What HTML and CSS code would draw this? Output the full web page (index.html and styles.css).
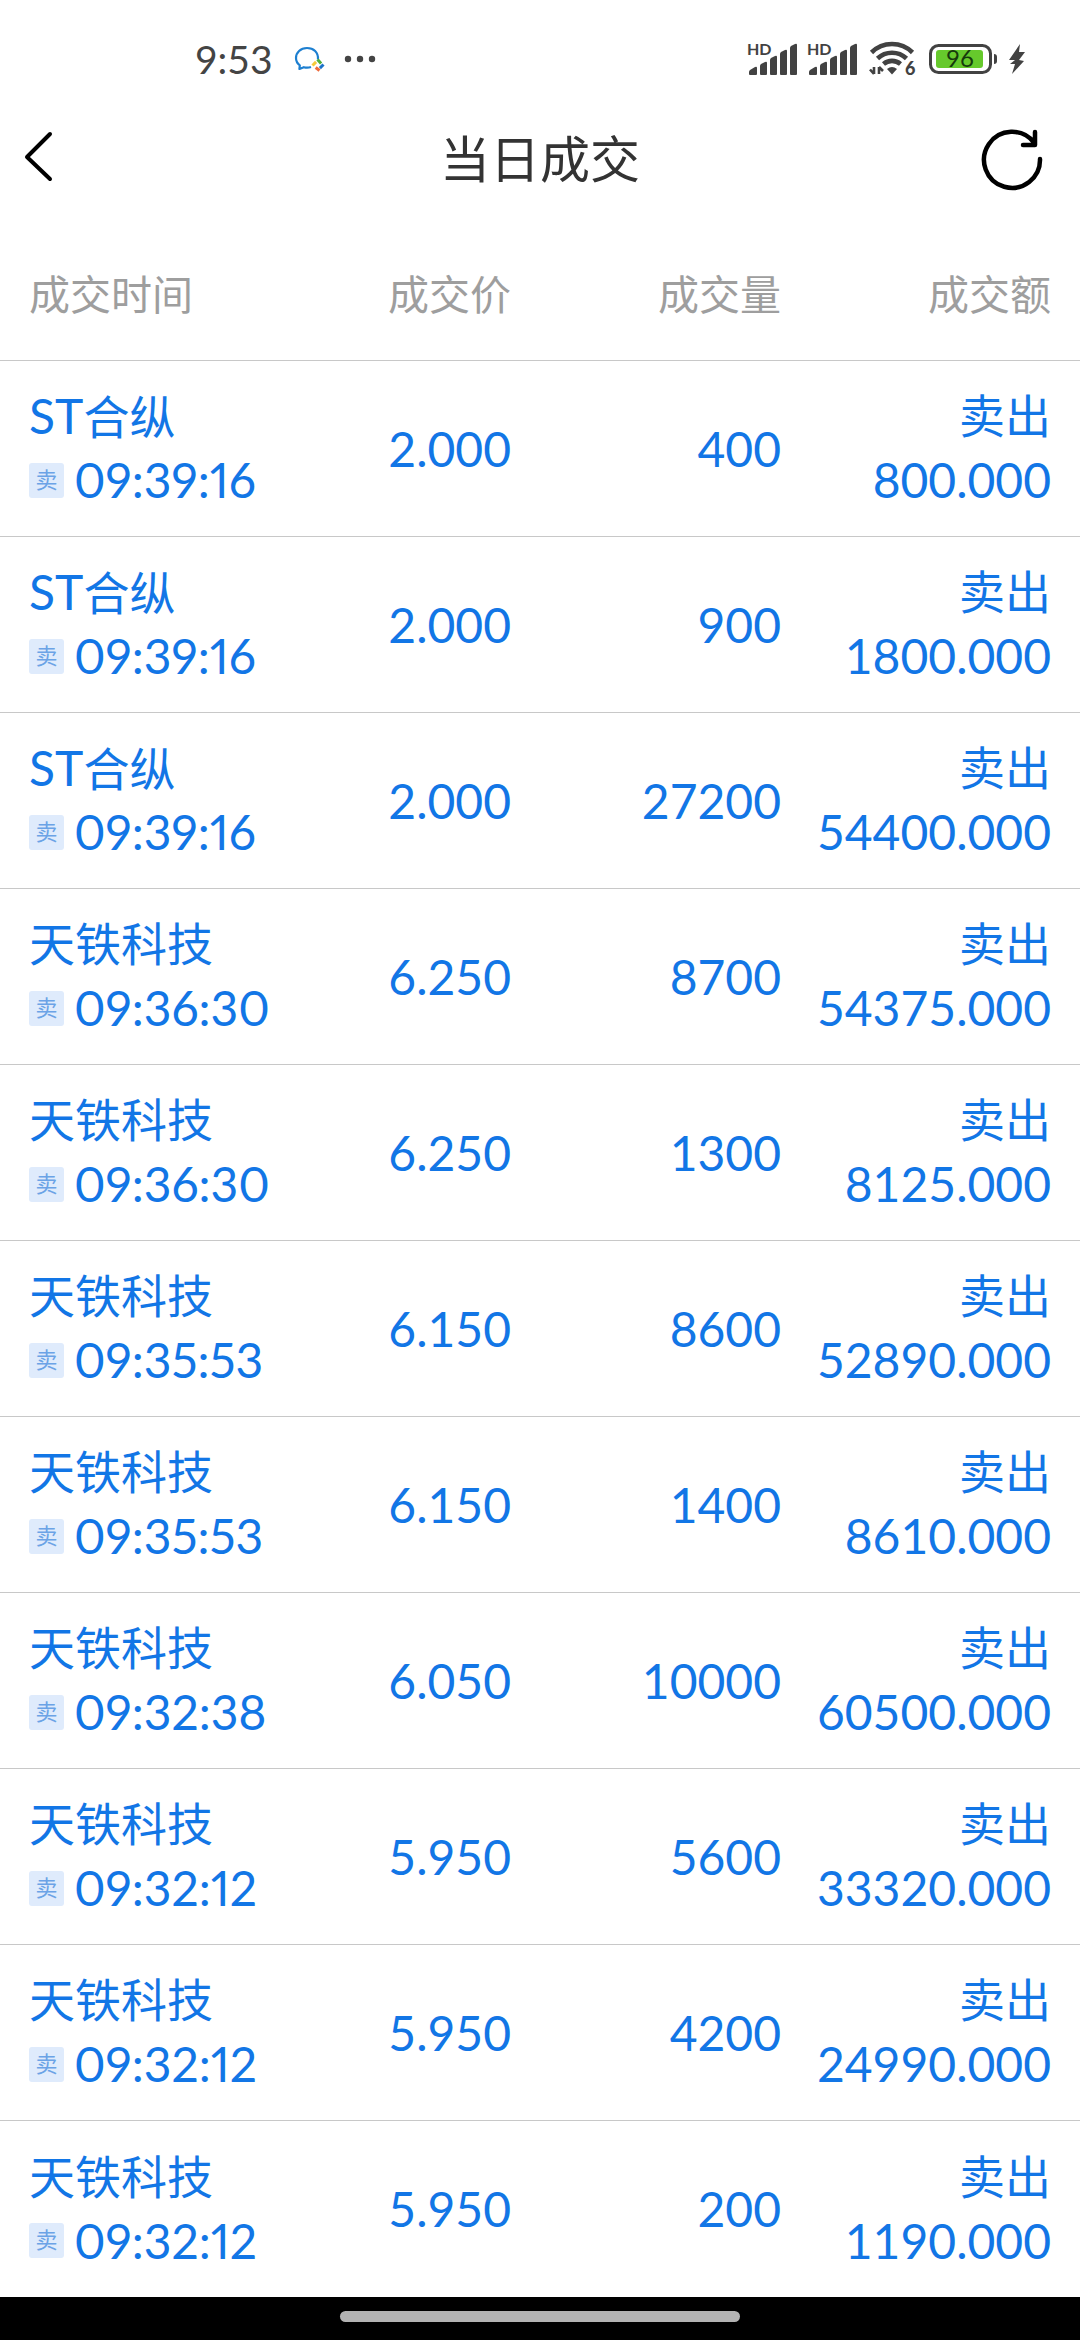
FILE: index.html
```html
<!DOCTYPE html>
<html lang="zh-CN">
<head>
<meta charset="utf-8">
<meta name="viewport" content="width=device-width, initial-scale=1">
<title>当日成交</title>
<link rel="stylesheet" href="styles.css">
</head>
<body>
<div class="status">
  <div class="status-left">
    <span class="clock">9:53</span>
    <svg class="chat-icon" width="36" height="36" viewBox="0 0 36 36" fill="none" aria-hidden="true">
      <path d="M27 18.500C27.500 11 22.500 7 16 7 9.500 7 5 11.500 5 17c0 3.200 1.500 5.600 3.800 7.300L8.400 28l4.400-1.800c2.400.7 5 .6 7.200-.2" stroke="#1d7fd0" stroke-width="2.200" stroke-linejoin="round"/>
      <path d="M26.500 18.500l3.600 4" stroke="#4fae3a" stroke-width="3"/>
      <path d="M32.500 23.500l-3.600 3.600" stroke="#1c72c8" stroke-width="3"/>
      <path d="M28.500 29.500l-3.800-3" stroke="#ee6a3b" stroke-width="3"/>
      <path d="M21.500 24.500l3.600-3.600" stroke="#f5c93a" stroke-width="3"/>
    </svg>
    <svg class="more-icon" width="32" height="8" viewBox="0 0 32 8" fill="#444" aria-hidden="true"><circle cx="4" cy="4" r="3.200"/><circle cx="16" cy="4" r="3.200"/><circle cx="28" cy="4" r="3.200"/></svg>
  </div>
  <div class="status-right">
    <svg width="52" height="38" viewBox="0 -2 52 38" fill="#424242" aria-hidden="true">
      <text class="hd" x="0" y="13">HD</text>
      <path d="M3 28l5-3q2-1 2 1v6q0 1-1 1H3q-1 0-1-1v-2q0-1 1-2zM14 22l4-2q2-1 2 1v11q0 1-1 1h-5q-1 0-1-1V24q0-1 1-2zM24 16l4-2q2-1 2 1v17q0 1-1 1h-5q-1 0-1-1V18q0-1 1-2zM34 10l4-2q2-1 2 1v23q0 1-1 1h-5q-1 0-1-1V12q0-1 1-2zM44 4l4-2q2-1 2 1v29q0 1-1 1h-5q-1 0-1-1V6q0-1 1-2z"/>
    </svg>
    <svg width="52" height="38" viewBox="0 -2 52 38" fill="#424242" aria-hidden="true">
      <text class="hd" x="0" y="13">HD</text>
      <path d="M3 28l5-3q2-1 2 1v6q0 1-1 1H3q-1 0-1-1v-2q0-1 1-2zM14 22l4-2q2-1 2 1v11q0 1-1 1h-5q-1 0-1-1V24q0-1 1-2zM24 16l4-2q2-1 2 1v17q0 1-1 1h-5q-1 0-1-1V18q0-1 1-2zM34 10l4-2q2-1 2 1v23q0 1-1 1h-5q-1 0-1-1V12q0-1 1-2zM44 4l4-2q2-1 2 1v29q0 1-1 1h-5q-1 0-1-1V6q0-1 1-2z"/>
    </svg>
    <svg class="wifi" width="48" height="40" viewBox="0 -1 48 40" fill="none" stroke="#424242" aria-hidden="true">
      <path d="M2.500 12.500a29 29 0 0 1 41 0M8.500 18.500a21 21 0 0 1 29 0M14.500 24a13 13 0 0 1 17 0" stroke-width="4.600"/>
      <path d="M18 29q5-4 10 0l-5 5.500z" fill="#424242" stroke="none"/>
      <path d="M5 27v7M10 27v7M1 29.500l4 4.500M10 27l4 4" stroke-width="2.600"/>
      <text class="wifi-gen" x="36" y="35">6</text>
    </svg>
    <svg class="battery" width="70" height="32" viewBox="0 0 70 32" aria-hidden="true">
      <rect x="1.500" y="2.500" width="60" height="27" rx="8" fill="#fff" stroke="#424242" stroke-width="3"/>
      <rect x="7" y="7" width="47" height="18" rx="3" fill="#66c92c"/>
      <path d="M65 11q3 0 3 3v4q0 3-3 3z" fill="#424242"/>
      <text class="charge" x="31" y="24">96</text>
    </svg>
    <svg class="bolt" width="20" height="32" viewBox="0 0 20 32" fill="#424242" aria-hidden="true"><path d="M13 1L2 17l6 0-5 4 5 0-3 10L17 18l-5-1 6-8h-6z"/></svg>
  </div>
</div>

<header class="appbar">
  <button class="icon-button back" type="button" aria-label="返回">
    <svg width="32" height="56" viewBox="0 0 32 56" fill="none" stroke="#000" stroke-width="4" stroke-linecap="round" stroke-linejoin="round"><path d="M28 3L5 26l23 22"/></svg>
  </button>
  <h1 class="title">当日成交</h1>
  <button class="icon-button refresh" type="button" aria-label="刷新">
    <svg width="64" height="64" viewBox="0 0 64 64" fill="none" stroke="#000" stroke-width="4.500" stroke-linecap="round" stroke-linejoin="round"><path d="M60 32A28 28 0 1 1 54 15.500M55 5v13H43"/></svg>
  </button>
</header>

<main class="content">
<table class="trades">
  <thead>
    <tr><th scope="col">成交时间</th><th scope="col">成交价</th><th scope="col">成交量</th><th scope="col">成交额</th></tr>
  </thead>
  <tbody>
    <tr><td><div class="name"><span class="latin">ST</span>合纵</div><div class="when"><span class="badge">卖</span><time>09:39:16</time></div></td><td>2.000</td><td>400</td><td><div class="side">卖出</div><div class="amount">800.000</div></td></tr>
    <tr><td><div class="name"><span class="latin">ST</span>合纵</div><div class="when"><span class="badge">卖</span><time>09:39:16</time></div></td><td>2.000</td><td>900</td><td><div class="side">卖出</div><div class="amount">1800.000</div></td></tr>
    <tr><td><div class="name"><span class="latin">ST</span>合纵</div><div class="when"><span class="badge">卖</span><time>09:39:16</time></div></td><td>2.000</td><td>27200</td><td><div class="side">卖出</div><div class="amount">54400.000</div></td></tr>
    <tr><td><div class="name">天铁科技</div><div class="when"><span class="badge">卖</span><time>09:36:30</time></div></td><td>6.250</td><td>8700</td><td><div class="side">卖出</div><div class="amount">54375.000</div></td></tr>
    <tr><td><div class="name">天铁科技</div><div class="when"><span class="badge">卖</span><time>09:36:30</time></div></td><td>6.250</td><td>1300</td><td><div class="side">卖出</div><div class="amount">8125.000</div></td></tr>
    <tr><td><div class="name">天铁科技</div><div class="when"><span class="badge">卖</span><time>09:35:53</time></div></td><td>6.150</td><td>8600</td><td><div class="side">卖出</div><div class="amount">52890.000</div></td></tr>
    <tr><td><div class="name">天铁科技</div><div class="when"><span class="badge">卖</span><time>09:35:53</time></div></td><td>6.150</td><td>1400</td><td><div class="side">卖出</div><div class="amount">8610.000</div></td></tr>
    <tr><td><div class="name">天铁科技</div><div class="when"><span class="badge">卖</span><time>09:32:38</time></div></td><td>6.050</td><td>10000</td><td><div class="side">卖出</div><div class="amount">60500.000</div></td></tr>
    <tr><td><div class="name">天铁科技</div><div class="when"><span class="badge">卖</span><time>09:32:12</time></div></td><td>5.950</td><td>5600</td><td><div class="side">卖出</div><div class="amount">33320.000</div></td></tr>
    <tr><td><div class="name">天铁科技</div><div class="when"><span class="badge">卖</span><time>09:32:12</time></div></td><td>5.950</td><td>4200</td><td><div class="side">卖出</div><div class="amount">24990.000</div></td></tr>
    <tr><td><div class="name">天铁科技</div><div class="when"><span class="badge">卖</span><time>09:32:12</time></div></td><td>5.950</td><td>200</td><td><div class="side">卖出</div><div class="amount">1190.000</div></td></tr>
  </tbody>
</table>
</main>

<div class="navbar"><div class="handle"></div></div>
</body>
</html>
```
FILE: styles.css
```css
* { box-sizing: border-box; }

body {
  margin: 0;
  min-height: 100vh;
  display: flex;
  flex-direction: column;
  background: #fff;
  color: #333;
  font-family: Lato, "Noto Sans CJK SC", sans-serif;
}

svg { overflow: visible; }

/* System status bar */
.status {
  height: 106px;
  padding: 12px 53px 0 195px;
  display: flex;
  align-items: center;
  justify-content: space-between;
}
.status-left, .status-right { display: flex; align-items: center; }
.clock { font-size: 39px; line-height: 48px; color: #444; }
.chat-icon { margin-left: 18px; }
.more-icon { margin-left: 17px; }
.status-right { gap: 8px; }
.wifi { margin-left: 2px; }
.battery { margin-left: 4px; }
.hd { font: 700 16px Lato, sans-serif; }
.wifi-gen { font: 900 18px Lato, sans-serif; fill: #424242; stroke: none; }
.charge { font: 400 24px Lato, sans-serif; fill: #163a0c; text-anchor: middle; }

/* Title bar */
.appbar {
  height: 106px;
  padding: 0 22px;
  display: grid;
  grid-template-columns: 1fr auto 1fr;
  align-items: center;
}
.icon-button {
  display: flex;
  padding: 0;
  border: 0;
  background: none;
}
.back { justify-self: start; }
.refresh { justify-self: end; margin-right: 14px; }
.title {
  margin: 0;
  font-size: 50px;
  line-height: 64px;
  font-weight: 400;
}

/* Trade list */
.content { flex: 1; padding-top: 18px; }
.trades {
  width: 100%;
  table-layout: fixed;
  border-collapse: separate;
  border-spacing: 0;
}
th, td {
  padding: 0 29px;
  border-bottom: 1px solid #c8c8c8;
  text-align: right;
  vertical-align: middle;
  white-space: nowrap;
}
th:first-child, td:first-child { padding-right: 0; text-align: left; }
th:last-child, td:last-child { padding-left: 0; }
th {
  height: 131px;
  font-size: 41px;
  line-height: 60px;
  font-weight: 400;
  color: #9e9e9e;
}
td {
  height: 176px;
  font-size: 48px;
  line-height: 62px;
  color: #1276e6;
}
tbody tr:last-child td { border-bottom: 0; }
.name, .side {
  height: 63px;
  font-size: 46px;
  line-height: 60px;
}
.latin { font-size: 48px; }
.when { display: flex; align-items: center; gap: 10px; }
.when time { font-variant-numeric: proportional-nums; }
.badge {
  flex: none;
  width: 35px;
  height: 35px;
  border-radius: 3px;
  background: #dfebfc;
  color: #6ba3e6;
  font-size: 22px;
  line-height: 34px;
  text-align: center;
}

/* Gesture navigation bar */
.navbar {
  height: 44px;
  padding-top: 14px;
  background: #000;
}
.handle { width: 37%; height: 11px; margin: 0 auto; border-radius: 6px; background: #b3b3b3; }
```
